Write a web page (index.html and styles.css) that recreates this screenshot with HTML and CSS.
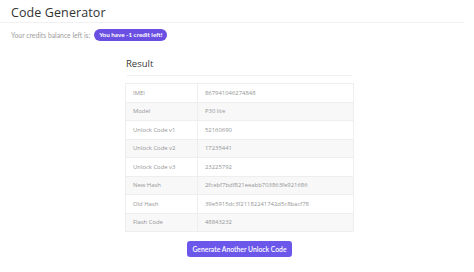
FILE: index.html
```html
<!DOCTYPE html>
<html>
<head>
<meta charset="utf-8">
<link rel="stylesheet" href="styles.css">
</head>
<body>
<div class="header"><h1 class="title">Code Generator</h1></div>
<div class="credits">
  <span class="credits-label">Your credits balance left is:</span>
  <span class="badge">You have -1 credit left!</span>
</div>
<div class="result">
  <h2 class="result-title">Result</h2>
  <table class="table">
    <tr><td class="k">IMEI</td><td>867941046274848</td></tr>
    <tr><td class="k">Model</td><td>P30 lite</td></tr>
    <tr><td class="k">Unlock Code v1</td><td>52160690</td></tr>
    <tr><td class="k">Unlock Code v2</td><td>17235441</td></tr>
    <tr><td class="k">Unlock Code v3</td><td>23225792</td></tr>
    <tr><td class="k">New Hash</td><td>2fcebf7bdf821eeabb703863fe921686</td></tr>
    <tr><td class="k">Old Hash</td><td>39e5915dc3f21182241742d5c8bacf78</td></tr>
    <tr><td class="k">Flash Code</td><td>48843232</td></tr>
  </table>
  <div class="actions"><button class="btn">Generate Another Unlock Code</button></div>
</div>
</body>
</html>
```
FILE: styles.css
```css
html, body { margin: 0; padding: 0; background: #fff; }
body { font-family: Lato, "Open Sans", sans-serif; width: 474px; height: 272px; overflow: hidden; }
.header { width: 464px; height: 23px; border-bottom: 1px solid #f1f1f3; box-sizing: border-box; padding: 5px 0 0 11px; }
.title { margin: 0; font-family: "Open Sans", sans-serif; font-weight: 500; font-size: 12.5px; line-height: 16px; color: #333; letter-spacing: 0.1px; }
.credits { display: flex; align-items: center; gap: 4px; padding: 6px 0 0 11px; height: 12px; }
.credits-label { font-size: 6.8px; color: #a0a0a0; }
.badge { background: #6a4fe2; color: #fff; font-weight: 700; font-size: 6.3px; border-radius: 6px; padding: 0 5px; height: 12px; line-height: 12px; }
.result { width: 229px; margin: 16px 0 0 125px; }
.result-title { margin: 0 2px 0 2px; font-family: "Open Sans", sans-serif; font-weight: 500; font-size: 9.5px; line-height: 13px; color: #3a3a3a; padding-bottom: 5px; border-bottom: 1px solid #f0f0f2; text-indent: -1px; }
.table { margin-top: 7px; width: 229px; border-collapse: collapse; font-family: "Open Sans", sans-serif; font-size: 5.9px; color: #959595; }
.table td { border: 1px solid #eeeeef; height: 17.5px; padding: 0 0 0 7px; line-height: 8px; }
.table td.k { width: 64px; }
.table tr:nth-child(even) td { background: #f8f8f9; }
.actions { display: flex; justify-content: center; margin-top: 9px; }
.btn { background: #6b57ea; color: #fff; border: 0; border-radius: 3px; font-family: Lato, sans-serif; font-weight: 600; font-size: 6.8px; width: 105px; height: 16px; padding: 0; }
```
